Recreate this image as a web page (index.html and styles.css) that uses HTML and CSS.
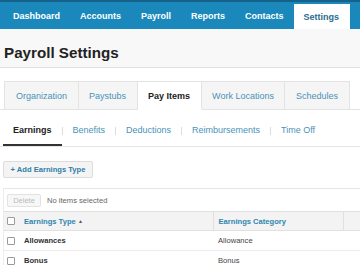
FILE: index.html
```html
<!DOCTYPE html>
<html>
<head>
<meta charset="utf-8">
<link rel="stylesheet" href="styles.css">
</head>
<body>
<nav class="topnav">
  <ul class="topnav-list">
    <li class="topnav-item">Dashboard</li>
    <li class="topnav-item">Accounts</li>
    <li class="topnav-item">Payroll</li>
    <li class="topnav-item">Reports</li>
    <li class="topnav-item">Contacts</li>
    <li class="topnav-item active">Settings</li>
  </ul>
</nav>
<header class="page-head">
  <h1 class="page-title">Payroll Settings</h1>
</header>
<div class="tabs">
  <div class="tab">Organization</div>
  <div class="tab">Paystubs</div>
  <div class="tab active">Pay Items</div>
  <div class="tab">Work Locations</div>
  <div class="tab">Schedules</div>
</div>
<div class="subnav">
  <span class="subnav-item active">Earnings</span>
  <span class="sep"></span>
  <span class="subnav-item">Benefits</span>
  <span class="sep"></span>
  <span class="subnav-item">Deductions</span>
  <span class="sep"></span>
  <span class="subnav-item">Reimbursements</span>
  <span class="sep"></span>
  <span class="subnav-item">Time Off</span>
</div>
<div class="actions">
  <button class="add-btn">+ Add Earnings Type</button>
</div>
<div class="grid">
  <div class="toolbar">
    <button class="del-btn">Delete</button>
    <span class="sel-info">No items selected</span>
  </div>
  <table class="data">
    <thead>
      <tr>
        <th class="c-check"><span class="cb"></span></th>
        <th class="c-type">Earnings Type <span class="sort">&#9650;</span></th>
        <th class="c-cat">Earnings Category</th>
        <th class="c-rest"></th>
      </tr>
    </thead>
    <tbody>
      <tr>
        <td class="c-check"><span class="cb"></span></td>
        <td class="c-type name">Allowances</td>
        <td class="c-cat">Allowance</td>
        <td class="c-rest"></td>
      </tr>
      <tr>
        <td class="c-check"><span class="cb"></span></td>
        <td class="c-type name">Bonus</td>
        <td class="c-cat">Bonus</td>
        <td class="c-rest"></td>
      </tr>
    </tbody>
  </table>
</div>
</body>
</html>
```

FILE: styles.css
```css
* { box-sizing: border-box; }
html, body { margin: 0; padding: 0; }
body {
  width: 360px;
  height: 265px;
  overflow: hidden;
  background: #ffffff;
  font-family: "Liberation Sans", Arial, sans-serif;
  color: #333;
}

.topnav {
  height: 29px;
  background: #1b88bc;
  border-top: 2px solid #16628a;
}
.topnav-list {
  list-style: none;
  margin: 0;
  padding: 0 0 0 3px;
  display: flex;
  height: 27px;
}
.topnav-item {
  padding: 0 10px;
  font-size: 9px;
  font-weight: bold;
  color: #ffffff;
  display: flex;
  align-items: center;
  height: 27px;
}
.topnav-item.active {
  background: #ffffff;
  color: #2a6b90;
  margin-top: 2px;
  height: 25px;
  padding: 0 11px 0 10px;
}

.page-head {
  height: 39px;
  background: #f8f8f8;
  border-bottom: 1px solid #e0e0e0;
  display: flex;
  align-items: center;
  padding-left: 4px;
}
.page-title {
  margin: 0;
  font-size: 15.2px;
  font-weight: bold;
  color: #222;
  padding-top: 8px;
}

.tabs {
  display: flex;
  margin-top: 13px;
  padding-left: 4px;
  height: 29px;
  border-bottom: 1px solid #e3e3e3;
}
.tab {
  height: 29px;
  padding: 0 10.5px;
  display: flex;
  align-items: center;
  font-size: 9px;
  color: #4a93b8;
  background: #f5f5f5;
  border: 1px solid #e3e3e3;
  border-left: none;
}
.tab:first-child { border-left: 1px solid #e3e3e3; padding-left: 11px; }
.tab.active {
  background: #ffffff;
  color: #222;
  font-weight: bold;
  border-bottom-color: #ffffff;
}

.subnav {
  display: flex;
  align-items: flex-end;
  height: 37px;
  padding-left: 3px;
  border-bottom: 1px solid #e6e6e6;
}
.subnav-item {
  padding: 0 10px 8px;
  font-size: 9px;
  line-height: 12px;
  color: #4a93b8;
  border-bottom: 2px solid transparent;
}
.subnav-item.active {
  color: #222;
  font-weight: bold;
  border-bottom-color: #333;
}
.sep {
  width: 1px;
  height: 8px;
  background: #dddddd;
  margin-bottom: 11px;
  align-self: flex-end;
}

.actions {
  padding: 14px 0 0 3px;
  height: 41px;
}
.add-btn {
  display: block;
  height: 17px;
  width: 90px;
  padding: 0;
  font-family: "Liberation Sans", Arial, sans-serif;
  font-size: 7.6px;
  font-weight: bold;
  color: #2f7fa8;
  background: #f4f4f4;
  border: 1px solid #dcdcdc;
  border-radius: 2px;
}

.grid {
  margin-left: 3px;
  border-top: 1px solid #e6e6e6;
  border-left: 1px solid #ececec;
}
.toolbar {
  height: 22px;
  display: flex;
  align-items: center;
  padding-left: 3px;
  gap: 6px;
}
.del-btn {
  height: 13px;
  width: 34px;
  padding: 0;
  font-family: "Liberation Sans", Arial, sans-serif;
  font-size: 7.5px;
  color: #bbbbbb;
  background: #f7f7f7;
  border: 1px solid #e2e2e2;
  border-radius: 2px;
}
.sel-info {
  font-size: 7.6px;
  color: #666;
}

.data {
  width: 100%;
  border-collapse: collapse;
  table-layout: fixed;
}
.data th, .data td {
  padding: 0;
  text-align: left;
  font-size: 7.6px;
  vertical-align: middle;
}
.data thead tr {
  background: #f3f3f3;
  border-top: 1px solid #e0e0e0;
  border-bottom: 1px solid #e0e0e0;
  height: 19px;
}
.data tbody tr {
  height: 20px;
  border-bottom: 1px solid #ececec;
}
.data th {
  font-weight: bold;
  color: #2f86b0;
}
.c-check { width: 16px; padding-left: 3px !important; }
.c-type { width: 193px; padding-left: 4px !important; }
.c-cat { width: 130px; padding-left: 5px !important; }
.data th.c-type, .data th.c-cat { border-right: 1px solid #e0e0e0; }
.data td { color: #444; }
.data td.name { color: #333; font-weight: bold; }
.cb {
  display: block;
  width: 8px;
  height: 8px;
  border: 1px solid #9a9a9a;
  border-radius: 1px;
  background: #ffffff;
}
.sort {
  font-size: 5px;
  color: #555;
  vertical-align: 1px;
}
```
